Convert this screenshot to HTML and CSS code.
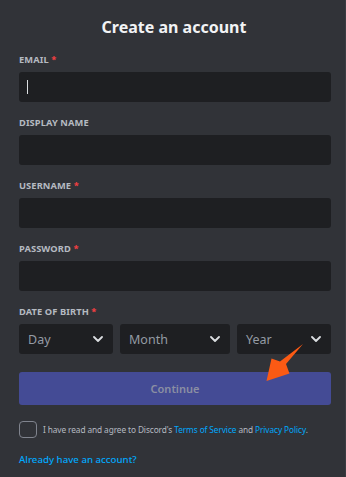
FILE: index.html
```html
<!DOCTYPE html>
<html>
<head>
<meta charset="utf-8">
<link rel="stylesheet" href="styles.css">
</head>
<body>
<div class="page">
  <h1 class="title">Create an account</h1>
  <div class="field">
    <div class="label">Email <span class="req">*</span></div>
    <div class="input"><span class="caret"></span></div>
  </div>
  <div class="field">
    <div class="label">Display Name</div>
    <div class="input"></div>
  </div>
  <div class="field">
    <div class="label">Username <span class="req">*</span></div>
    <div class="input"></div>
  </div>
  <div class="field">
    <div class="label">Password <span class="req">*</span></div>
    <div class="input"></div>
  </div>
  <div class="field field-last">
    <div class="label">Date of Birth <span class="req">*</span></div>
    <div class="dob">
      <div class="select"><span>Day</span><svg class="chev" viewBox="0 0 10 6"><path d="M1 1l4 4 4-4" fill="none" stroke="currentColor" stroke-width="1.8" stroke-linecap="round" stroke-linejoin="round"/></svg></div>
      <div class="select"><span>Month</span><svg class="chev" viewBox="0 0 10 6"><path d="M1 1l4 4 4-4" fill="none" stroke="currentColor" stroke-width="1.8" stroke-linecap="round" stroke-linejoin="round"/></svg></div>
      <div class="select"><span>Year</span><svg class="chev" viewBox="0 0 10 6"><path d="M1 1l4 4 4-4" fill="none" stroke="currentColor" stroke-width="1.8" stroke-linecap="round" stroke-linejoin="round"/></svg></div>
    </div>
  </div>
  <div class="button">Continue</div>
  <div class="agree">
    <div class="checkbox"></div>
    <div class="agree-text">I have read and agree to Discord's <span class="link">Terms of Service</span> and <span class="link">Privacy Policy</span>.</div>
  </div>
  <div class="login">Already have an account?</div>
  <svg class="arrow" viewBox="0 0 346 477" width="346" height="477">
    <path d="M303 344 L286 364 L289.5 373.5 L266.5 381 L271.5 358.5 L280 361.5 Z" fill="#fb5a14"/>
  </svg>
</div>
</body>
</html>
```
FILE: styles.css
```css
html, body {
  margin: 0;
  padding: 0;
  background: #313338;
}
body {
  font-family: "Noto Sans", "Open Sans", sans-serif;
  width: 346px;
  height: 477px;
  overflow: hidden;
}
.page {
  position: relative;
  box-sizing: border-box;
  padding: 16px 14px 0 19px;
  height: 477px;
  border-right: 1px solid #3a3c42;
}
.title {
  margin: 0 0 16px;
  font-size: 16px;
  line-height: 22px;
  font-weight: 700;
  color: #f2f3f5;
  text-align: center;
  padding-right: 2px;
}
.field {
  margin-bottom: 15px;
}
.field-last {
  margin-bottom: 18px;
}
.label {
  font-size: 9.3px;
  line-height: 12px;
  height: 12px;
  font-weight: 700;
  text-transform: uppercase;
  color: #b5bac1;
  letter-spacing: 0.01em;
  margin-bottom: 6px;
}
.req {
  color: #f23f42;
}
.input {
  height: 30px;
  background: #1e1f22;
  border-radius: 3px;
  display: flex;
  align-items: center;
  padding-left: 8px;
}
.caret {
  width: 1px;
  height: 14px;
  background: #dbdee1;
}
.dob {
  display: grid;
  grid-template-columns: 94fr 110fr 94fr;
  gap: 7px;
}
.select {
  height: 30px;
  background: #1e1f22;
  border-radius: 3px;
  display: flex;
  align-items: center;
  justify-content: space-between;
  padding: 0 10px 0 9px;
  font-size: 12.5px;
  color: #949ba4;
}
.chev {
  width: 10px;
  height: 6px;
  color: #dbdee1;
}
.button {
  height: 33px;
  background: #444b95;
  border-radius: 3px;
  display: flex;
  align-items: center;
  justify-content: center;
  font-size: 11px;
  font-weight: 600;
  color: #8b8fa3;
  margin-bottom: 16px;
}
.agree {
  display: flex;
  align-items: center;
  gap: 6px;
  margin-bottom: 15px;
}
.checkbox {
  box-sizing: border-box;
  width: 18px;
  height: 17px;
  border: 1px solid #80848e;
  border-radius: 4px;
  flex: none;
}
.agree-text {
  font-size: 8.3px;
  line-height: 12px;
  color: #b5bac1;
  letter-spacing: -0.1px;
}
.link {
  color: #00a8fc;
}
.login {
  font-size: 9.7px;
  line-height: 14px;
  font-weight: 500;
  color: #00a8fc;
}
.arrow {
  position: absolute;
  left: 0;
  top: 0;
  pointer-events: none;
}
```
